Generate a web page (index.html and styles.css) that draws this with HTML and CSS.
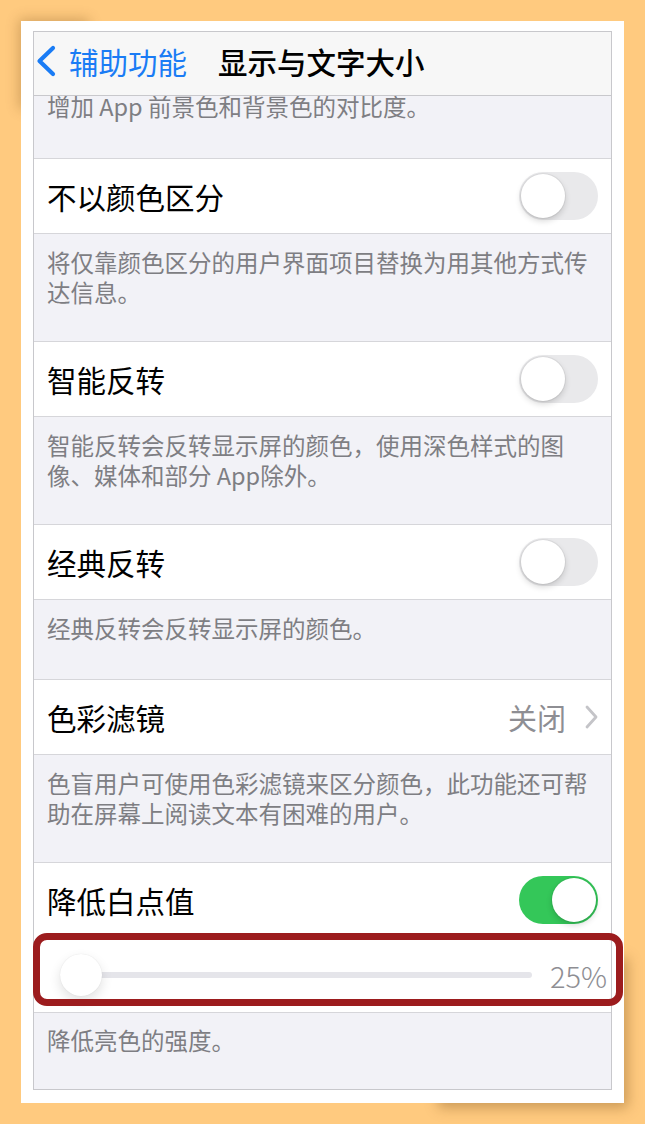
FILE: index.html
```html
<!DOCTYPE html>
<html lang="zh-CN">
<head>
<meta charset="UTF-8">
<meta name="viewport" content="width=device-width, initial-scale=1.0">
<title>显示与文字大小</title>
<link rel="stylesheet" href="styles.css">
</head>
<body>

<div class="frame">
    <div class="screen">

        <!-- 导航栏 -->
        <header class="navbar">
            <a class="back" href="#">
                <svg width="22" height="32" viewBox="0 0 22 32"><path d="M18 3 L4.5 16 L18 29" fill="none" stroke="#1a7cf5" stroke-width="4.2" stroke-linecap="round" stroke-linejoin="round"/></svg>
                <span>辅助功能</span>
            </a>
            <h1 class="title">显示与文字大小</h1>
        </header>

        <p class="footnote first">增加 App 前景色和背景色的对比度。</p>

        <div class="cell">
            <span class="label">不以颜色区分</span>
            <span class="switch"></span>
        </div>
        <p class="footnote">将仅靠颜色区分的用户界面项目替换为用其他方式传达信息。</p>

        <div class="cell">
            <span class="label">智能反转</span>
            <span class="switch"></span>
        </div>
        <p class="footnote">智能反转会反转显示屏的颜色，使用深色样式的图像、媒体和部分 App除外。</p>

        <div class="cell">
            <span class="label">经典反转</span>
            <span class="switch"></span>
        </div>
        <p class="footnote single">经典反转会反转显示屏的颜色。</p>

        <div class="cell">
            <span class="label">色彩滤镜</span>
            <span class="detail">
                关闭
                <svg width="14" height="24" viewBox="0 0 14 24"><path d="M3 2 L12 12 L3 22" fill="none" stroke="#c4c4c8" stroke-width="2.8" stroke-linecap="round" stroke-linejoin="round"/></svg>
            </span>
        </div>
        <p class="footnote">色盲用户可使用色彩滤镜来区分颜色，此功能还可帮助在屏幕上阅读文本有困难的用户。</p>

        <div class="cell open">
            <span class="label">降低白点值</span>
            <span class="switch on"></span>
        </div>
        <div class="cell slider">
            <div class="track">
                <span class="thumb"></span>
            </div>
            <span class="value">25%</span>
            <span class="highlight"></span>
        </div>
        <p class="footnote last">降低亮色的强度。</p>

    </div>
</div>

</body>
</html>
```

FILE: styles.css
```css
body {
    margin: 0;
    padding: 21px;
    background: #ffca7f;
    font-family: "Noto Sans CJK SC", "Noto Sans", sans-serif;
}

/* 相框 */
.frame {
    position: relative;
    height: 1082px;
    box-sizing: border-box;
    padding: 10px 12px 13px 12px;
    background: #fff;
    display: flex;
    flex-direction: column;
}
.frame::before,
.frame::after {
    content: '';
    position: absolute;
    z-index: -1;
}
/* 左上角和右下角的卷边阴影 */
.frame::before {
    top: 2px;
    left: 2px;
    width: 70px;
    height: 90px;
    box-shadow: -4px -4px 12px rgba(110, 70, 20, 0.3);
}
.frame::after {
    right: 2px;
    bottom: 2px;
    width: 190px;
    height: 150px;
    box-shadow: 6px 7px 12px rgba(110, 70, 20, 0.35);
}

/* 手机屏幕 */
.screen {
    flex: 1;
    display: flex;
    flex-direction: column;
    background: #f2f2f7;
    border: 1px solid #c8c8cc;
}

.navbar {
    position: relative;
    z-index: 1;
    display: flex;
    align-items: center;
    padding: 0 0 5px 1px;
    box-sizing: border-box;
    height: 64px;
    background: #f7f7f7;
    border-bottom: 1px solid #c8c8cc;
}
.back {
    display: flex;
    align-items: center;
    color: #1a7cf5;
    text-decoration: none;
    font-size: 29.5px;
}
.back svg {
    display: block;
}
.back span {
    margin-left: 12px;
}
.title {
    margin: 0 0 0 31px;
    font-size: 29.5px;
    font-weight: 500;
    color: #000;
}

/* 说明文字 */
.footnote {
    margin: 0;
    padding: 13px 13px 34px 13px;
    font-size: 23.5px;
    line-height: 30px;
    color: #7e7e83;
}
.footnote.first {
    margin-top: -5px;
    padding-top: 0;
    padding-bottom: 37px;
}
.footnote.single {
    padding-bottom: 36px;
}
.footnote.last {
    flex: 1;
    padding-top: 12px;
}

/* 表格行 */
.cell {
    height: 76px;
    box-sizing: border-box;
    display: flex;
    align-items: center;
    justify-content: space-between;
    padding: 0 13px;
    background: #fff;
    border-top: 1px solid #d6d6da;
    border-bottom: 1px solid #d6d6da;
}
.cell.open {
    border-bottom: none;
    height: 75px;
}
.label {
    font-size: 29.5px;
    color: #000;
}
.detail {
    display: flex;
    align-items: center;
    gap: 18px;
    font-size: 29px;
    color: #8e8e93;
}
.detail svg {
    display: block;
}

/* 开关 */
.switch {
    position: relative;
    width: 79px;
    height: 48px;
    border-radius: 24px;
    background: #e9e9eb;
}
.switch::after {
    content: '';
    position: absolute;
    top: 2px;
    left: 2px;
    width: 44px;
    height: 44px;
    border-radius: 50%;
    background: #fff;
    box-shadow: 0 3px 6px rgba(0, 0, 0, 0.16), 0 0 0 1px rgba(0, 0, 0, 0.05);
}
.switch.on {
    background: #34c759;
}
.switch.on::after {
    left: 33px;
}

/* 滑块 */
.slider {
    position: relative;
    border-top: none;
    height: 76px;
    padding: 0 4px 0 26px;
    gap: 18px;
}
.track {
    position: relative;
    flex: 1;
    height: 6px;
    border-radius: 3px;
    background: #e5e5ea;
}
.thumb {
    position: absolute;
    left: 0;
    top: 50%;
    width: 42px;
    height: 42px;
    margin-top: -21px;
    border-radius: 50%;
    background: #fff;
    box-shadow: 0 5px 12px rgba(0, 0, 0, 0.12), 0 0 1px rgba(0, 0, 0, 0.12);
}
.value {
    font-size: 29px;
    font-weight: 300;
    color: #8e8e93;
}
.highlight {
    position: absolute;
    top: -4px;
    left: -1px;
    right: -12px;
    bottom: 6px;
    border: 7px solid #9c1c1e;
    border-radius: 14px;
}
```
